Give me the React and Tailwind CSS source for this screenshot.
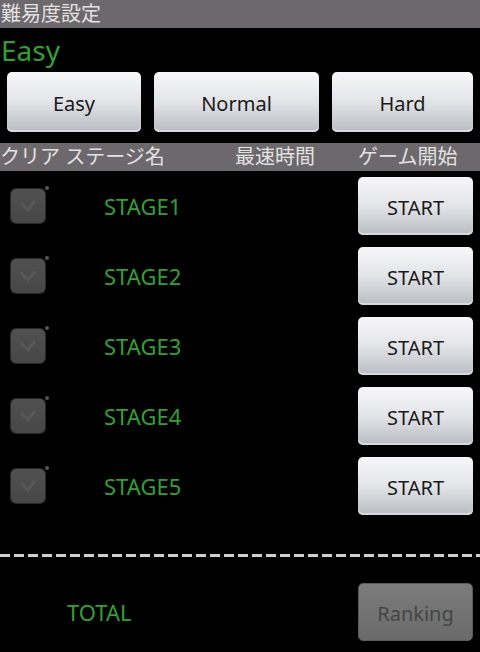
import React from "react";

const font = { fontFamily: '"Noto Sans", "Noto Sans CJK JP", sans-serif' };

function Btn({ children, className }) {
  return (
    <div
      className={
        "flex items-center justify-center pt-[3px] rounded-[5px] bg-gradient-to-b from-[#f7f7f9] via-[#e3e4e8] to-[#b9bcc3] text-[#1a1a1a] text-[20px] shadow-[inset_0_-2px_0_#d8dade] " +
        className
      }
    >
      {children}
    </div>
  );
}

function Check() {
  return (
    <div className="relative w-[34px] h-[34px] ml-[11px] rounded-[5px] bg-gradient-to-b from-[#505050] to-[#474747] shadow-[0_0_0_1px_#2a2a2a]">
      <svg className="absolute left-[8px] top-[9px]" width="18" height="14" viewBox="0 0 18 14">
        <path d="M2 5 L9 12 L16 3" stroke="#585858" strokeWidth="3" fill="none" />
      </svg>
      <div className="absolute right-[-4px] top-[-3px] w-[4px] h-[4px] rounded-full bg-[#555]" />
    </div>
  );
}

export default function App() {
  const stages = ["STAGE1", "STAGE2", "STAGE3", "STAGE4", "STAGE5"];
  return (
    <div className="w-[480px] h-[652px] bg-black overflow-hidden" style={font}>
      <div className="h-[28px] bg-[#6d686c] text-[#e2e2e2] text-[20px] leading-[28px] pl-[1px]">
        難易度設定
      </div>
      <div className="h-[44px] text-[28px] leading-[44px] text-[#32a032] pl-[1px]">Easy</div>
      <div className="flex h-[60px] pl-[7px] gap-[13px]">
        <Btn className="w-[134px] h-[60px]">Easy</Btn>
        <Btn className="w-[165px] h-[60px]">Normal</Btn>
        <Btn className="w-[141px] h-[60px]">Hard</Btn>
      </div>
      <div className="mt-[11px] h-[28px] bg-[#6d686c] text-[#e2e2e2] text-[20px] leading-[28px] flex">
        <div className="w-[235px]">クリア ステージ名</div>
        <div className="w-[123px]">最速時間</div>
        <div>ゲーム開始</div>
      </div>
      <div className="flex flex-col">
        {stages.map((s) => (
          <div key={s} className="h-[70px] flex items-center">
            <Check />
            <div className="ml-[59px] w-[254px] text-[22px] text-[#32a032]">{s}</div>
            <Btn className="w-[115px] h-[58px]">START</Btn>
          </div>
        ))}
      </div>
      <div className="mt-[33px] h-[3px] w-full bg-[repeating-linear-gradient(90deg,#cfcfcf_0px,#cfcfcf_10px,transparent_10px,transparent_14px)]" />
      <div className="mt-[26px] flex items-center h-[58px]">
        <div className="ml-[67px] w-[291px] text-[22px] text-[#32a032]">TOTAL</div>
        <div className="w-[115px] h-[58px] pt-[3px] rounded-[5px] bg-gradient-to-b from-[#7c7c7c] to-[#6a6a6a] border border-[#5a5a5a] flex items-center justify-center text-[20px] text-[#454545]">
          Ranking
        </div>
      </div>
    </div>
  );
}
